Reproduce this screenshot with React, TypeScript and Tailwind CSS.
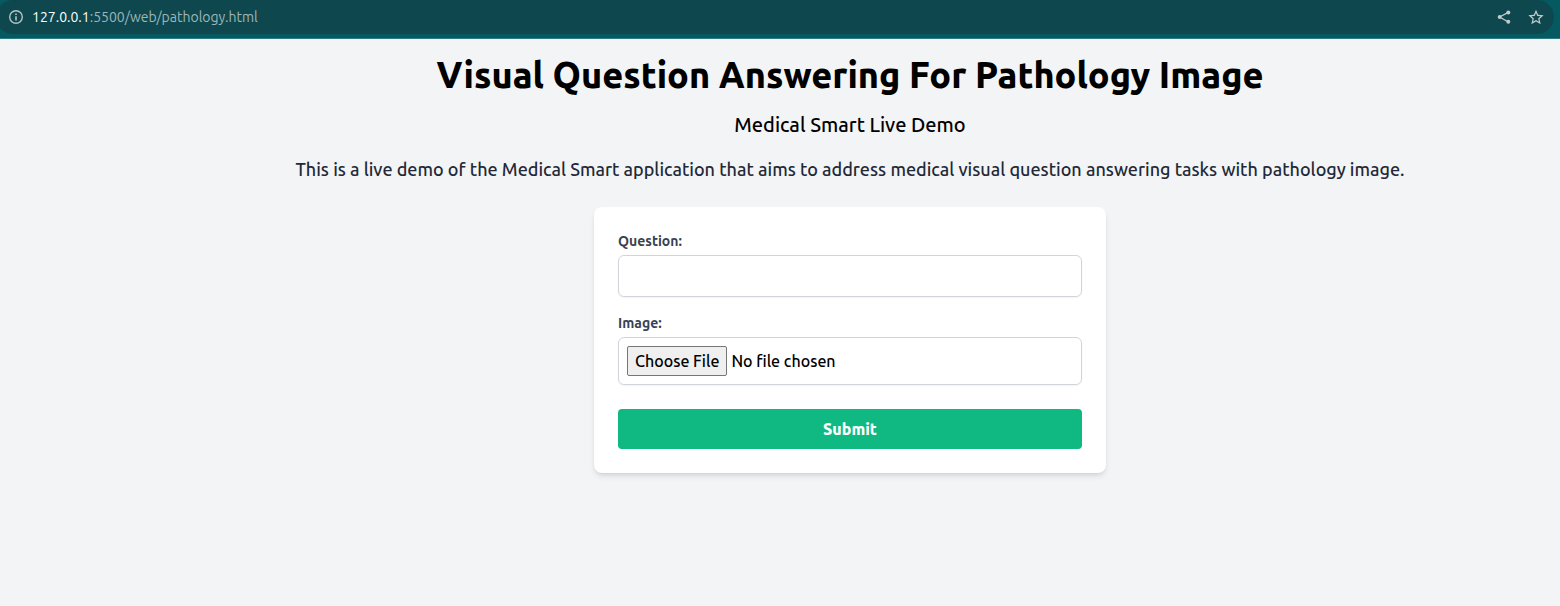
import React from "react";

function InfoIcon() {
  return (
    <svg viewBox="0 0 16 16" className="size-4 shrink-0" fill="none" stroke="currentColor" aria-hidden="true">
      <circle cx="8" cy="8" r="6.3" strokeWidth="1.4" />
      <path d="M8 7.2v4.2M8 4.4v1.6" strokeWidth="1.6" />
    </svg>
  );
}

function ShareIcon() {
  return (
    <svg viewBox="0 0 16 16" className="size-4" aria-hidden="true">
      <path d="M12.4 3.4 3.6 8l8.8 5" fill="none" stroke="currentColor" strokeWidth="1.3" />
      <circle cx="12.3" cy="3.4" r="2" fill="currentColor" />
      <circle cx="3.7" cy="8" r="2" fill="currentColor" />
      <circle cx="12.3" cy="12.8" r="2" fill="currentColor" />
    </svg>
  );
}

function StarIcon() {
  return (
    <svg viewBox="1.5 1 21 21" className="size-4" fill="currentColor" aria-hidden="true">
      <path d="M22 9.24l-7.19-.62L12 2 9.19 8.63 2 9.24l5.46 4.73L5.82 21 12 17.27 18.18 21l-1.63-7.03L22 9.24zM12 15.4l-3.76 2.27 1-4.28-3.32-2.88 4.38-.38L12 6.1l1.71 4.04 4.38.38-3.32 2.88 1 4.28L12 15.4z" />
    </svg>
  );
}

function AddressBar() {
  return (
    <header className="overflow-hidden border-b border-[#2f7a80] bg-[#045a60] pr-[6px] pb-1">
      <div className="-ml-1 flex h-[34px] items-center rounded-full bg-[#0e484e] pr-[10px] pl-3 text-[#b3c3c6]">
        <InfoIcon />
        <p className="ml-2 grow text-[14px] leading-5 text-[#9fb6b9]">
          <span className="text-white">127.0.0.1</span>:5500/web/pathology.html
        </p>
        <div className="flex gap-4 text-[#c3c9cc]">
          <button type="button" aria-label="Share">
            <ShareIcon />
          </button>
          <button type="button" aria-label="Bookmark">
            <StarIcon />
          </button>
        </div>
      </div>
    </header>
  );
}

export default function App() {
  return (
    <div className="flex min-h-screen flex-col bg-[#f3f4f6] font-['Ubuntu','Noto_Sans',sans-serif] text-black">
      <AddressBar />
      <main className="flex flex-col items-center pt-4 pl-[140px] text-center font-medium">
        <h1 className="text-[36px] leading-10 font-extrabold">Visual Question Answering For Pathology Image</h1>
        <h2 className="mt-4 text-[20px] leading-7">Medical Smart Live Demo</h2>
        <p className="mt-4 text-[18px] leading-7 text-[#1f2937]">
          This is a live demo of the Medical Smart application that aims to address medical visual question answering
          tasks with pathology image.
        </p>
        <form
          className="mt-6 w-full max-w-lg rounded-lg bg-white p-6 text-left shadow-md"
          onSubmit={(e) => e.preventDefault()}
        >
          <label htmlFor="question" className="block text-[14px] leading-5 font-semibold text-[#374151]">
            Question:
          </label>
          <input
            id="question"
            type="text"
            className="mt-1 block w-full rounded-md border border-[#d1d5db] p-2 text-[16px] leading-6 shadow-xs"
          />
          <label htmlFor="image" className="mt-4 block text-[14px] leading-5 font-semibold text-[#374151]">
            Image:
          </label>
          <input
            id="image"
            type="file"
            className="mt-1 block w-full rounded-md border border-[#d1d5db] p-2 text-[16px] leading-6 shadow-xs file:mr-1 file:rounded-[2px] file:border file:border-solid file:border-[#767676] file:bg-[#efefef] file:px-[7px] file:py-[2px]"
          />
          <button
            type="submit"
            className="mt-6 block h-10 w-full rounded bg-[#10b981] text-[16px] leading-6 font-extrabold text-white"
          >
            Submit
          </button>
        </form>
      </main>
    </div>
  );
}
